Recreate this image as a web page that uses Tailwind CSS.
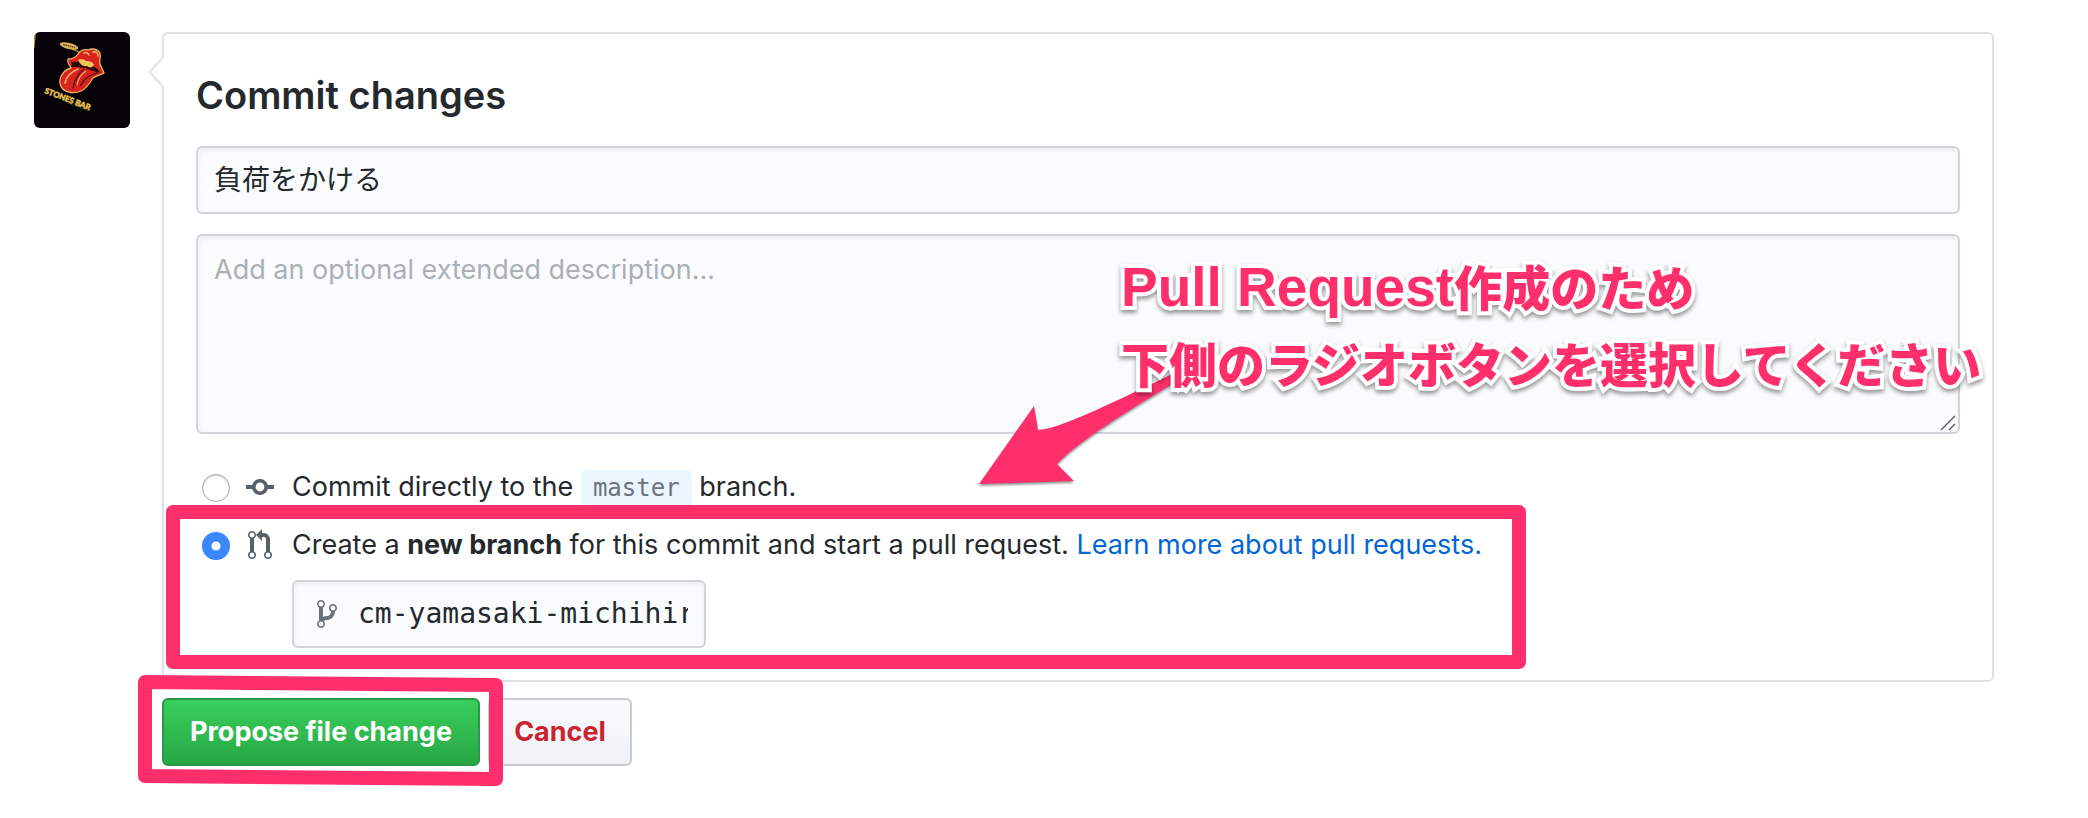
<!DOCTYPE html>
<html lang="en">
<head>
<meta charset="utf-8">
<title>Commit changes</title>
<script src="https://cdn.jsdelivr.net/npm/@tailwindcss/browser@4"></script>
</head>
<body class="bg-white font-[Inter,'Noto_Sans_CJK_JP',sans-serif] text-[27px] leading-[42px] text-[#24292e]">
<main class="relative min-h-screen pt-8 pr-[94px] pl-[34px]">
  <form>
    <div class="flex items-start gap-8">
      <svg class="h-24 w-24 shrink-0 rounded-md" viewBox="0 0 96 96" role="img" aria-label="Stones Bar avatar">
        <rect width="96" height="96" fill="#050208"/>
        <path d="M0 0h2L.5 16H0z" fill="#c98a1c"/>
        <g transform="rotate(14 35 14)"><ellipse cx="35" cy="14" rx="9.500" ry="3" fill="#d9b45c"/><path d="M29 14h12" stroke="#5a4220" stroke-width="1.500" stroke-dasharray="1.500 .7"/></g>
        <path d="M38 17l7 3" stroke="#d9b45c"/>
        <path d="M34 27c4 0 8-2 10-5 2-3 6-5 10-4 4-2 10-1 12 3 1 3-1 8 0 11 1 3 3 6 4 9-4 2-8 3-11 5-3 5-7 11-12 13-6 3-15 2-19-3-4-6-2-12 2-16 3-3 7-4 7-4-2-3-4-6-3-9z" fill="#d8231f" stroke="#eab65a" stroke-width="1.300" stroke-linejoin="round"/>
        <path d="M37 30c6 0 8-1 11-2 5 4 8 6 13 7 3 2 4 4 5 6-6-2-11-3-15-5-5-1-9-1-14-1 1-2 1-3 0-5z" fill="#2a0a0a"/>
        <path d="M44 28c3-2 6-1 8 1 4 0 7 1 8 4-2 3-5 3-7 1-4 1-7-2-9-6z" fill="#f0c25c"/>
        <path d="M50 21c2-1 4 0 5 2M59 20c3-1 5 1 5 4" fill="none" stroke="#f2b968" stroke-width="1.500" stroke-linecap="round"/>
        <path d="M44 37c-7 3-12 8-13 14" fill="none" stroke="#f2a864" stroke-width="1.800" stroke-linecap="round"/>
        <path d="M50 37c-6 5-10 11-11 20M64 41c-8 1-14 6-18 13" fill="none" stroke="#5e1011" stroke-width="1.500"/>
        <path d="M52 39c-5 3-8 8-9 14" fill="none" stroke="#efb45e" stroke-width="1.200"/>
        <text transform="translate(10 61) rotate(21)" font-family="Lato, sans-serif" font-weight="900" font-size="8" fill="#e4c14f" stroke="#e4c14f" stroke-width=".5">STONES BAR</text>
        <path d="M34 71l20 8" stroke="#6b5526" stroke-width=".8" stroke-dasharray="1.500 1"/>
      </svg>

      <section class="relative min-w-0 flex-1 rounded-md border-2 border-[#dfe2e5] px-8 pt-9 pb-8">
        <svg class="absolute top-[22px] -left-4 h-8 w-4" viewBox="0 0 16 32" aria-hidden="true">
          <path d="M16 1L2 16l14 15z" fill="#fff"/><path d="M15 1.500L1.500 16 15 30.500" fill="none" stroke="#dfe2e5" stroke-width="2"/>
        </svg>
        <h3 class="mb-[26px] text-[38px] leading-[50px] font-semibold">Commit changes</h3>
        <input type="text" aria-label="Commit summary" value="負荷をかける" class="block h-[68px] w-full rounded-md border-2 border-[#d1d5da] bg-[#fafbfc] px-4 pb-1 text-[28px] shadow-[inset_0_2px_4px_rgba(27,31,35,0.075)]">
        <div class="relative mt-5">
          <textarea aria-label="Extended description" placeholder="Add an optional extended description..." class="block h-[200px] w-full resize-none rounded-md border-2 border-[#d1d5da] bg-[#fafbfc] px-4 py-[13px] shadow-[inset_0_2px_4px_rgba(27,31,35,0.075)] placeholder:text-[#abb0b7]"></textarea>
          <svg class="absolute right-1 bottom-[3px] h-4 w-4" viewBox="0 0 16 16" fill="none" stroke="#555" stroke-width="1.300" aria-hidden="true"><path d="M1 15L15 1M9 15l6-6"/></svg>
        </div>

        <div class="mt-8 flex h-[42px] items-center pl-1.5">
          <input type="radio" id="direct" name="target" class="mt-0.5 h-7 w-7 appearance-none rounded-full border border-[#a9a9a9] bg-white shadow-[inset_0_1px_2px_rgba(0,0,0,0.2)]">
          <label for="direct" class="flex items-center">
            <svg class="mx-4 h-8 w-7" viewBox="0 0 14 16" fill="#586069" aria-hidden="true"><path fill-rule="evenodd" d="M10.860 7c-.45-1.720-2-3-3.860-3-1.860 0-3.410 1.280-3.860 3H0v2h3.140c.45 1.720 2 3 3.860 3 1.860 0 3.410-1.280 3.860-3H14V7h-3.140zM7 10.200c-1.220 0-2.200-.98-2.200-2.200 0-1.220.98-2.200 2.200-2.200 1.220 0 2.200.98 2.200 2.200 0 1.220-.98 2.200-2.200 2.200z"/></svg>
            <span class="ml-0.5">Commit directly to the <code class="rounded-md bg-[#eaf5ff] px-3 py-1 font-['DejaVu_Sans_Mono',monospace] text-2xl text-[#6a737d]">master</code> branch.</span>
          </label>
        </div>
        <div class="mt-4 flex h-[42px] items-center pl-1.5">
          <input type="radio" id="branch" name="target" checked class="mt-0.5 h-7 w-7 appearance-none rounded-full bg-[#3b88fd] bg-[radial-gradient(circle,#fff_4px,#3b88fd_5px)]">
          <label for="branch" class="flex items-center">
            <svg class="mx-4 h-8 w-7" viewBox="-1 0 14 16" fill="#586069" aria-hidden="true"><path fill-rule="evenodd" d="M11 11.280V5c-.03-.78-.34-1.470-.94-2.060C9.460 2.350 8.780 2.030 8 2H7V0L4 3l3 3V4h1c.27.02.48.11.69.31.21.2.3.42.31.69v6.280A1.993 1.993 0 0 0 10 15a1.993 1.993 0 0 0 1-3.720zm-1 2.920c-.66 0-1.200-.55-1.200-1.200 0-.65.55-1.200 1.200-1.200.65 0 1.200.55 1.200 1.200 0 .65-.55 1.200-1.200 1.200zM4 3c0-1.110-.89-2-2-2a1.993 1.993 0 0 0-1 3.720v6.560A1.993 1.993 0 0 0 2 15a1.993 1.993 0 0 0 1-3.720V4.720c.59-.34 1-.98 1-1.720zm-.8 10c0 .66-.55 1.200-1.200 1.200-.65 0-1.200-.55-1.200-1.200 0-.65.55-1.200 1.200-1.200.65 0 1.200.55 1.200 1.200zM2 4.200C1.340 4.200.8 3.650.8 3c0-.65.55-1.200 1.200-1.200.65 0 1.200.55 1.200 1.200 0 .65-.55 1.200-1.200 1.200z"/></svg>
            <span class="ml-0.5">Create a <strong class="font-bold">new branch</strong> for this commit and start a pull request. <a href="#" class="text-[#0366d6]">Learn more about pull requests.</a></span>
          </label>
        </div>
        <div class="mt-3.5 ml-24 flex h-[68px] w-[414px] items-center gap-[18px] rounded-md border-2 border-[#d1d5da] bg-[#fafbfc] pr-4 pl-[22px] shadow-[inset_0_2px_4px_rgba(27,31,35,0.075)]">
          <svg class="h-8 w-6 shrink-0" viewBox="-.5 0 12 16" fill="#6a737d" aria-hidden="true"><path fill-rule="evenodd" d="M10 5c0-1.110-.89-2-2-2a1.993 1.993 0 0 0-1 3.720v.3c-.02.52-.23.98-.63 1.380-.4.4-.86.61-1.380.63-.83.02-1.480.16-2 .45V4.720a1.993 1.993 0 0 0-1-3.720C.88 1 0 1.890 0 3a2 2 0 0 0 1 1.720v6.560c-.59.35-1 .99-1 1.720 0 1.110.89 2 2 2 1.110 0 2-.89 2-2 0-.53-.2-1-.53-1.360.09-.06.48-.41.59-.47.25-.11.56-.17.94-.17 1.050-.05 1.950-.45 2.750-1.250S8.950 7.770 9 6.730h-.02C9.590 6.370 10 5.730 10 5zM2 1.800c.66 0 1.200.55 1.200 1.200 0 .65-.55 1.200-1.200 1.200C1.350 4.200.8 3.650.8 3c0-.65.55-1.200 1.200-1.200zm0 12.410c-.66 0-1.200-.55-1.200-1.200 0-.65.55-1.200 1.200-1.200.65 0 1.200.55 1.200 1.200 0 .65-.55 1.200-1.200 1.200zm6-8c-.66 0-1.200-.55-1.200-1.200 0-.65.55-1.200 1.200-1.200.65 0 1.200.55 1.200 1.200 0 .65-.55 1.200-1.200 1.200z"/></svg>
          <input type="text" aria-label="New branch name" value="cm-yamasaki-michihiro-patch-1" class="min-w-0 flex-1 bg-transparent font-['DejaVu_Sans_Mono',monospace] text-[28px]">
        </div>
      </section>
    </div>

    <div class="mt-4 ml-32 flex gap-2 font-bold">
      <button type="button" class="h-[68px] w-[318px] rounded-md border-2 border-[#2c974b] bg-linear-to-b from-[#38cf5b] to-[#28a745] text-white">Propose file change</button>
      <button type="button" class="h-[68px] w-36 rounded-md border-2 border-[#c8cbcf] bg-linear-to-b from-[#fafbfc] to-[#eff3f6] text-[#cb2431]">Cancel</button>
    </div>
  </form>

  <!-- Annotations drawn over the form -->
  <svg class="pointer-events-none absolute top-0 left-0 h-[818px] w-[2088px] max-w-none" viewBox="0 0 2088 818" aria-hidden="true">
    <path d="M979 484L1034 406L1038 430C1058 429 1100 409 1172 374V384C1125 413 1080 440 1057 464L1074 481Z" fill="#ff2f6c" class="drop-shadow-[0_2px_1px_rgba(0,0,0,0.4)]"/>
    <rect x="173" y="512" width="1346" height="150" fill="none" stroke="#ff2f6c" stroke-width="14" stroke-linejoin="round"/>
    <path d="M145 682L496 685V779L145 776Z" fill="none" stroke="#ff2f6c" stroke-width="14" stroke-linejoin="round"/>
  </svg>
  <p class="pointer-events-none absolute top-[249px] left-[1121px] text-5xl leading-[77px] font-black whitespace-nowrap text-[#ff2f6c] drop-shadow-[0_3px_2px_rgba(0,0,0,0.4)] [-webkit-text-stroke:8px_white] [paint-order:stroke_fill]"><span class="font-['Liberation_Sans',sans-serif] text-[55px]">Pull Request</span>作成のため<br>下側のラジオボタンを選択してください</p>
</main>
</body>
</html>
